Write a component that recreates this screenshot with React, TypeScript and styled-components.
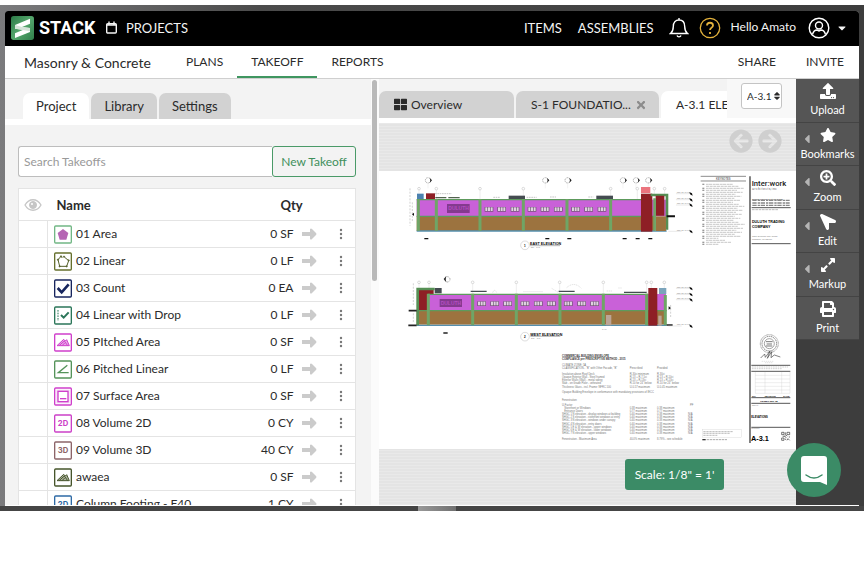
import React from "react";
import styled, { createGlobalStyle } from "styled-components";
import {
  FaUpload,
  FaStar,
  FaSearchPlus,
  FaLocationArrow,
  FaExpandAlt,
  FaPrint,
  FaThLarge,
  FaTimes,
  FaCaretDown,
  FaCaretLeft,
  FaSort,
  FaArrowCircleLeft,
  FaArrowCircleRight,
} from "react-icons/fa";

const green = "#3b8b66";
const line = "#e4e4e4";

const GlobalStyle = createGlobalStyle`
  * { box-sizing: border-box; }
  body { margin: 0; background: #fff; color: #2b2b2b; font: 12px/16px Lato, "Liberation Sans", sans-serif; }
  button, input, select { font: inherit; color: inherit; margin: 0; }
  button { border: 0; background: none; padding: 0; cursor: pointer; }
  a { color: inherit; text-decoration: none; }
  svg { display: block; flex: none; }
`;

const Page = styled.div`
  height: 100vh;
  display: grid;
  grid-template-rows: minmax(0, 1fr) 70px;
  padding-top: 5px;
`;

const Monitor = styled.div`
  display: flex;
  flex-direction: column;
  padding: 6px 5px 0;
  background: linear-gradient(90deg, #7b7b7d, #4b4b4b 30%, #3d3d3d 100%);
  min-height: 0;
`;

const Chin = styled.div`
  flex: none;
  height: 5px;
  margin: 0 -5px;
  background: #454545;
  display: flex;
  justify-content: center;
`;

const Stand = styled.span`
  width: 38px;
  margin-left: 10px;
  background: linear-gradient(90deg, #999, #707070);
`;

const Screen = styled.div`
  flex: 1;
  min-height: 0;
  display: flex;
  flex-direction: column;
  border-radius: 3px 3px 0 0;
  overflow: hidden;
  background: #fff;
  border-bottom: 1px solid #fff;
`;

const TopBar = styled.header`
  flex: none;
  height: 35px;
  background: #000;
  color: #f4f4f4;
  display: flex;
  align-items: center;
  padding: 0 11px 2px 6px;
  font-size: 13px;
`;

const Brand = styled.a`
  display: flex;
  align-items: center;
  gap: 5px;
  width: 95px;
  color: #fff;
  font: bold 18px/24px Roboto, "Liberation Sans", sans-serif;
`;

const TopLink = styled.a`
  display: flex;
  align-items: center;
  gap: 9px;
`;

const TopLinks = styled.div`
  display: flex;
  gap: 16px;
  margin-right: 3px;
`;

const TopRight = styled.div`
  margin-left: auto;
  display: flex;
  align-items: center;
  gap: 12px;
`;

const TopTools = styled.div`
  display: flex;
  align-items: center;
  gap: 10px;
`;

const Greeting = styled.span`
  font-size: 12px;
  padding-bottom: 2px;
`;

const Account = styled.button`
  display: flex;
  align-items: center;
  gap: 6px;
`;

const NavBar = styled.nav`
  flex: none;
  height: 33px;
  display: flex;
  border-bottom: 1px solid #cfcfcf;
  padding: 0 15px 0 19px;
`;

const ProjectName = styled.h1`
  margin: 0;
  width: 148px;
  font-size: 14px;
  line-height: 33px;
  font-weight: 400;
  white-space: nowrap;
`;

const NavLink = styled.a<{ $active?: boolean }>`
  height: 32px;
  padding: 0 14px;
  line-height: 31px;
  border-bottom: 2px solid ${(p) => (p.$active ? "#3f9660" : "transparent")};
`;

const NavEnd = styled.div`
  margin-left: auto;
  display: flex;
  gap: 30px;
  line-height: 31px;
`;

const Main = styled.div`
  flex: 1;
  min-height: 0;
  display: grid;
  grid-template-columns: 374px minmax(0, 1fr) 63px;
`;

const Panel = styled.aside`
  display: grid;
  grid-template-columns: minmax(0, 1fr) 8px;
  min-height: 0;
  overflow: hidden;
`;

const PanelBody = styled.div`
  background: #f3f3f3;
  overflow: hidden;
`;

const Track = styled.div`
  background: #fbfbfb;
  padding: 1px 2px 0 1px;
`;

const Thumb = styled.div`
  height: 201px;
  border-radius: 3px;
  background: #b9b9b9;
`;

const TabRow = styled.div`
  display: flex;
  gap: 2px;
  padding: 14px 0 0 18px;
  border-bottom: 6px solid #fff;
`;

const PanelTab = styled.button<{ $active?: boolean }>`
  height: 26px;
  padding: 0 13px;
  font-size: 13px;
  border-radius: 7px 7px 0 0;
  background: ${(p) => (p.$active ? "#fff" : "#d2d2d2")};
`;

const SearchRow = styled.div`
  display: flex;
  height: 31px;
  margin: 21px 15px 11px 13px;
`;

const SearchBox = styled.input`
  flex: 1;
  min-width: 0;
  border: 1px solid #bdbdbd;
  border-right: 0;
  border-radius: 3px 0 0 3px;
  background: #fff;
  padding: 0 5px;
  &::placeholder { color: #999; opacity: 1; }
`;

const NewButton = styled.button`
  width: 84px;
  border: 1px solid #4a9a68;
  border-radius: 3px;
  color: #3f8f5c;
  white-space: nowrap;
`;

const Takeoffs = styled.table`
  width: calc(100% - 28px);
  margin-left: 13px;
  table-layout: fixed;
  border-collapse: collapse;
  background: #fff;
  border: 1px solid ${line};
  td, th { padding: 0; border-bottom: 1px solid ${line}; }
  th { height: 32px; text-align: left; font-weight: 700; font-size: 13px; }
  td { height: 27px; white-space: nowrap; }
  tbody td:first-child { border-right: 1px solid ${line}; }
  svg { margin: 0 auto; }
`;

const Col = styled.col<{ $w?: number }>`
  width: ${(p) => (p.$w ? p.$w + "px" : "auto")};
`;

const NameHead = styled.th`
  && { padding-left: 9px; }
`;

const QtyHead = styled.th`
  && { padding-left: 59px; }
`;

const NameCell = styled.div`
  display: flex;
  align-items: center;
  gap: 4px;
  padding-left: 6px;
  && svg { margin: 0; }
`;

const QtyCell = styled.td`
  text-align: right;
`;

const RowButton = styled.button`
  display: block;
  margin: 0 auto;
`;

const Viewer = styled.section`
  display: flex;
  flex-direction: column;
  min-width: 0;
  min-height: 0;
`;

const SheetBar = styled.div`
  flex: none;
  display: flex;
  background: #f3f3f3;
  height: 44px;
  border-bottom: 5px solid #fff;
`;

const SheetTabs = styled.div`
  flex: 1;
  min-width: 0;
  display: flex;
  gap: 2px;
  padding-top: 12px;
  overflow: hidden;
`;

const SheetTab = styled.button<{ $active?: boolean; $w: number }>`
  flex: none;
  width: ${(p) => p.$w}px;
  height: 27px;
  display: flex;
  align-items: center;
  gap: 4px;
  padding: 0 ${(p) => (p.$w > 140 ? 12 : 15)}px 0 15px;
  justify-content: ${(p) => (p.$w > 140 ? "space-between" : "flex-start")};
  border-radius: 7px 7px 0 0;
  background: ${(p) => (p.$active ? "#fff" : "#d2d2d2")};
  white-space: nowrap;
`;

const PickerArea = styled.div`
  flex: none;
  width: 69px;
  padding: 4px 14px;
  background: #f8f8f8;
`;

const Picker = styled.label`
  display: flex;
  align-items: center;
  height: 26px;
  padding: 0 2px 0 5px;
  border: 1px solid #c4c4c4;
  border-radius: 3px;
  background: #fff;
  font-size: 10px;
`;

const PickerSelect = styled.select`
  appearance: none;
  flex: none;
  border: 0;
  padding: 0;
  background: none;
`;

const Canvas = styled.div`
  position: relative;
  flex: 1;
  min-height: 0;
  padding-top: 48px;
  overflow: hidden;
  background-color: #e4e4e4;
  background-image: repeating-linear-gradient(0deg, rgba(255, 255, 255, 0.2) 0 1px, transparent 1px 3px);
`;

const Paging = styled.div`
  position: absolute;
  top: 6px;
  right: 14px;
  display: flex;
  gap: 5px;
  color: #cfcfcf;
`;

const Sheet = styled.svg`
  width: 100%;
  height: auto;
  background: #fff;
`;

const ScaleTag = styled.button`
  position: absolute;
  right: 72px;
  bottom: 15px;
  width: 99px;
  height: 31px;
  border-radius: 3px;
  background: ${green};
  color: #fff;
`;

const Rail = styled.aside`
  background: #3d3d3d;
  position: relative;
`;

const ToolList = styled.div`
  height: 261px;
  display: grid;
  grid-template-rows: repeat(6, 1fr);
`;

const Tool = styled.button`
  position: relative;
  width: 100%;
  border-bottom: 1px solid #444;
  padding-top: 4px;
  display: flex;
  flex-direction: column;
  align-items: center;
  gap: 3px;
  background: #555;
  color: #fff;
  font-size: 11px;
  line-height: 15px;
`;

const Flyout = styled.span`
  position: absolute;
  left: 4px;
  top: 9px;
  color: #b5b5b5;
`;

const Flip = styled.span`
  transform: scaleX(-1);
`;

const Chat = styled.button`
  position: absolute;
  right: 18px;
  bottom: 8px;
  width: 54px;
  height: 54px;
  border-radius: 50%;
  background: ${green};
  display: grid;
  place-items: center;
`;

function LogoMark() {
  return (
    <svg width="23" height="24" viewBox="0 0 69 72">
      <defs>
        <linearGradient id="mark" x1="0" y1="0" x2="1" y2="1">
          <stop offset="0" stopColor="#2c7a48" />
          <stop offset="0.5" stopColor="#55a66c" />
          <stop offset="1" stopColor="#2f7f4b" />
        </linearGradient>
      </defs>
      <rect width="69" height="72" rx="8" fill="url(#mark)" />
      <path d="M12 27 57 8v15L33 33l24 3v12L12 66V52l25-11-25-3Z" fill="#fff" />
      <path d="m12 27 21 6 24 3v10L12 38Z" fill="#d5e4d9" />
    </svg>
  );
}

function GlyphBox({ kind, color }: { kind: string; color: string }) {
  return (
    <svg width="18" height="19" viewBox="0 0 54 57">
      <rect x="2" y="3" width="50" height="51" rx="3" fill="#fff" stroke={color} strokeWidth="4" />
      {kind === "area" && <path d="M27 12 43 24 37 44H17L11 24Z" fill="#b565b4" />}
      {kind === "linear" && (
        <g fill="#55602a" stroke="#55602a" strokeWidth="2">
          <path d="m25 18-4-5-9 10 5 20h21l6-17-13-11" fill="none" strokeWidth="3" />
          {[[12, 23], [17, 43], [38, 43], [44, 25], [30, 14], [21, 13]].map(([x, y]) => (
            <circle key={x} cx={x} cy={y} r="2" />
          ))}
        </g>
      )}
      {kind === "count" && <path d="m11 27 12 13 21-24" fill="none" stroke={color} strokeWidth="8" />}
      {kind === "drop" && (
        <g fill="none" stroke={color}>
          <path d="M12 12v33" strokeWidth="3" strokeDasharray="5 3" />
          <path d="m21 27 8 8 15-16" strokeWidth="6" />
        </g>
      )}
      {kind === "roof" && (
        <g fill="none" stroke={color} strokeWidth="3">
          <path d="m9 38 20-19 5 5 4-4 8 18Z" fill={color} fillOpacity="0.45" />
          <path d="m15 38 16-14 10 14M24 38l8-8" />
        </g>
      )}
      {kind === "angle" && <path d="M40 16 13 38h31" fill="none" stroke={color} strokeWidth="4" />}
      {kind === "surface" && (
        <g fill="none" stroke={color}>
          <rect x="7" y="8" width="40" height="41" stroke="none" fill={color} fillOpacity="0.2" />
          <rect x="12" y="13" width="30" height="31" fill="#fff" strokeWidth="4" />
          <path d="M18 35h19" strokeWidth="4" />
        </g>
      )}
      {(kind === "2D" || kind === "3D") && (
        <text x="27" y="37" textAnchor="middle" fontSize="23" fontWeight="700" fontFamily="Inter, sans-serif" fill={color}>
          {kind}
        </text>
      )}
    </svg>
  );
}

const takeoffs = [
  ["area", "#72b785", "01 Area", "0 SF"],
  ["linear", "#66702d", "02 Linear", "0 LF"],
  ["count", "#17255e", "03 Count", "0 EA"],
  ["drop", "#2b7659", "04 Linear with Drop", "0 LF"],
  ["roof", "#cf3fcb", "05 PItched Area", "0 SF"],
  ["angle", "#55935a", "06 Pitched Linear", "0 LF"],
  ["surface", "#cf3fcb", "07 Surface Area", "0 SF"],
  ["2D", "#cc40c8", "08 Volume 2D", "0 CY"],
  ["3D", "#8c6468", "09 Volume 3D", "40 CY"],
  ["roof", "#46552b", "awaea", "0 SF"],
  ["2D", "#2e6aa5", "Column Footing - F40", "1 CY"],
];

function Marker({ x, y }: { x: number; y: number }) {
  return (
    <g>
      <circle cx={x} cy={y} r="8" fill="#fff" stroke="#777" strokeWidth="2" strokeDasharray="3 2" />
      <path d={`M${x + 5} ${y - 8}l7 8-7 8 2-8Z`} fill="#222" />
      <path d={`M${x} ${y + 10}v14`} stroke="#ddd" strokeWidth="1" />
    </g>
  );
}

function WindowGroup({ x, y }: { x: number; y: number }) {
  return (
    <g>
      <rect x={x} y={y} width="26" height="14" fill="#6f5573" />
      {[2, 10, 18].map((d) => (
        <rect key={d} x={x + d} y={y + 1} width="6" height="11" fill="#e0d2e0" />
      ))}
    </g>
  );
}

function Levels({ y }: { y: number }) {
  return (
    <g>
      {[0, 18, 34, 113].map((d) => (
        <g key={d}>
          <path d={`M${d > 100 ? 805 : 828} ${y + d}h40`} stroke="#bbb" strokeWidth="1" />
          <path d={`m868 ${y + d - 5} 8 4 2 7-8-4Z`} fill="#111" />
          <text x="830" y={y + d - 2} fontSize="6" fill="#888">TOP OF WALL</text>
        </g>
      ))}
    </g>
  );
}

function EastElevation() {
  return (
    <g transform="translate(21 -6) scale(0.3333)">
      {[84, 436, 503, 669, 708, 745].map((x) => <Marker key={x} x={x} y={46} />)}
      {[57, 109, 240, 370, 632, 712, 763, 794].map((x) => (
        <g key={x}>
          <circle cx={x} cy="71" r="4" fill="none" stroke="#999" />
          <path d={`M${x} 75v28`} stroke="#ccc" />
        </g>
      ))}
      <path d="M30 70v112M37 112v60" stroke="#bbb" strokeWidth="2" strokeDasharray="6 4" />
      <path d="m36 148 6-5v10Z" fill="#111" />
      <path d="M105 86h50M280 97h20M380 97h30M450 96h18M565 96h15" stroke="#aaa" strokeWidth="2" strokeDasharray="5 2" />
      <rect x="51" y="86" width="20" height="16" fill="#4c82b0" />
      <rect x="78" y="85" width="27" height="17" fill="#8e1f25" />
      <path d="M106 98h33M145 98h34" stroke="#52634f" strokeWidth="4" />
      <rect x="326" y="92" width="49" height="10" fill="#444b50" />
      <rect x="589" y="92" width="50" height="10" fill="#444b50" />
      <rect x="50" y="104" width="750" height="50" fill="#c961d8" />
      <rect x="50" y="154" width="715" height="44" fill="#9c733f" />
      <path d="M50 198h750" stroke="#558fae" strokeWidth="4" />
      <path d="M50 104h700M50 154h715" stroke="#5d9a5c" strokeWidth="4" />
      <path d="M55 103v94M109 103v94M240 103v94M370 103v94M501 103v94M632 103v94" stroke="#6fa566" strokeWidth="9" />
      <rect x="141" y="117" width="68" height="27" fill="#843a8e" />
      <text x="145" y="136" fontSize="15" fontWeight="700" fill="#b44dc3">DULUTH</text>
      {[254, 292, 332, 383, 422, 462, 514, 553, 593].map((x) => <WindowGroup key={x} x={x} y={126} />)}
      <rect x="723" y="66" width="28" height="18" fill="#eb747e" />
      <rect x="723" y="86" width="34" height="114" fill="#8e1f25" />
      <path d="M752 90h49v104" fill="none" stroke="#568f54" strokeWidth="8" />
      <path d="M767 92h26v60h-26Z" fill="#8e1f25" />
      <rect x="768" y="154" width="30" height="44" fill="#9c733f" />
      <path d="M764 100v97" stroke="#6fa566" strokeWidth="8" />
      <path d="M800 154h25" stroke="#111" strokeWidth="6" />
      <path d="M73 221h12M436 221h12M502 221h12M668 221h12M707 221h12M745 221h12" stroke="#111" strokeWidth="4" />
      <Levels y={86} />
      <circle cx="375" cy="241" r="13" fill="#fff" stroke="#999" />
      <text x="372" y="245" fontSize="9" fontWeight="700">1</text>
      <text x="390" y="240" fontSize="11" fontWeight="700">EAST ELEVATION</text>
      <path d="M390 242h90" stroke="#222" />
      <text x="392" y="250" fontSize="6" fill="#666">1/8" = 1'-0"</text>
    </g>
  );
}

function WestElevation() {
  return (
    <g transform="translate(21 84) scale(0.3333)">
      <path d="m139 63-8 9 8 10-2-9Z" fill="#111" />
      <circle cx="142" cy="73" r="8" fill="none" stroke="#777" strokeWidth="2" strokeDasharray="3 2" />
      {[57, 87, 218, 349, 479, 610, 740, 754, 793].map((x) => (
        <g key={x}>
          <circle cx={x} cy="82" r="4" fill="none" stroke="#999" />
          <path d={`M${x} 86v30`} stroke="#ccc" />
        </g>
      ))}
      <path d="M40 85v65M40 175v30M812 150v40" stroke="#bbb" strokeWidth="2" strokeDasharray="6 4" />
      <path d="M278 113q6-14 12 0M370 110h58M500 98q22-20 44 2M620 108h18M655 99h12M455 100l20 12" fill="none" stroke="#aaa" strokeDasharray="4 2" />
      <rect x="56" y="104" width="45" height="62" fill="#8e1f25" />
      <rect x="104" y="99" width="21" height="16" fill="#444b50" />
      <path d="M212 109h48M476 109h48M672 112h68" stroke="#444b50" strokeWidth="4" />
      <rect x="84" y="117" width="714" height="48" fill="#c961d8" />
      <rect x="50" y="168" width="748" height="41" fill="#9c733f" />
      <path d="M50 211h750" stroke="#558fae" strokeWidth="4" />
      <path d="M84 118h660M50 167h750" stroke="#5d9a5c" strokeWidth="4" />
      <path d="M53 211V102h51" fill="none" stroke="#568f54" strokeWidth="8" />
      <path d="M85 116v95M218 116v95M349 116v95M480 116v95M610 116v95M740 116v95M796 120v91" stroke="#6fa566" strokeWidth="9" />
      <rect x="119" y="132" width="67" height="24" fill="#843a8e" />
      <text x="122" y="149" fontSize="15" fontWeight="700" fill="#b44dc3">DULUTH</text>
      {[232, 271, 310, 362, 402, 441, 492, 532, 571].map((x) => <WindowGroup key={x} x={x} y={139} />)}
      <rect x="618" y="180" width="16" height="31" fill="#bba596" />
      <rect x="745" y="99" width="27" height="113" fill="#8e1f25" />
      <rect x="777" y="99" width="22" height="18" fill="#7ba4bb" />
      <rect x="775" y="182" width="10" height="30" fill="#bba596" />
      <path d="M26 167h24M25 211h25M800 210h18M130 234h13" stroke="#222" strokeWidth="5" />
      <path d="m806 154 7 5-7 5Z" fill="#111" />
      <Levels y={100} />
      <circle cx="375" cy="245" r="13" fill="#fff" stroke="#999" />
      <text x="372" y="249" fontSize="9" fontWeight="700">2</text>
      <text x="391" y="242" fontSize="11" fontWeight="700">WEST ELEVATION</text>
      <path d="M391 244h90" stroke="#222" />
      <text x="393" y="252" fontSize="6" fill="#666">1/8" = 1'-0"</text>
      <text x="606" y="226" fontSize="7" fill="#888">TYP.</text>
    </g>
  );
}

const envelope = [
  [103, "Insulation above Roof Deck", "R-30ci minimum", "R-30ci"],
  [113, "Opaque Exterior Wall - Steel framed", "R-13 + R-7.5ci", "R-13 + R-10ci"],
  [122, "Exterior Walls (Wall) - metal siding", "R-13 + R-13ci", "R-13 + R-13ci"],
  [131, "Slab - on Grade Floor - unheated", "R-10 for 24\" below", "R-10 for 24\" below"],
  [141, "Thickness Glass - incl. Frame: NFRC 100", "U-0.57 maximum", "U-0.45 maximum"],
  [206, "Storefront or Windows", "0.38 maximum", "0.38 maximum"],
  [215, "Entrance Doors", "0.77 maximum", "0.77 maximum"],
  [224, "SHGC 1   N elevation - display windows at building", "0.40 maximum", "0.38 maximum"],
  [233, "SHGC 2   S elevation - storefront windows at entry", "0.40 maximum", "0.38 maximum"],
  [242, "SHGC 3   N elevation - windows under canopy", "0.40 maximum", "0.38 maximum"],
  [252, "SHGC 4   N elevation - entry doors", "0.40 maximum", "0.38 maximum"],
  [261, "SHGC 5   E & W elevation - upper windows", "0.40 maximum", "0.38 maximum"],
  [270, "SHGC 6   E & W elevation - lower windows", "0.40 maximum", "0.38 maximum"],
  [281, "SHGC 7   N elevation - upper windows", "0.40 maximum", "0.38 maximum"],
  [298, "Fenestration - Maximum Area", "40.0% maximum", "8.79% - see schedule"],
] as const;

function EnvelopeNotes() {
  return (
    <g transform="translate(151 169) scale(0.3333)" fontSize="8" fill="#777">
      <text x="96" y="51" fontWeight="700" fill="#333">COMMERCIAL BUILDING ENVELOPE</text>
      <text x="96" y="60" fontWeight="700" fill="#333">COMPLIANCE per PRESCRIPTIVE METHOD - 2015</text>
      <text x="96" y="79">CLIMATE ZONE: 5A</text>
      <text x="96" y="88">CLASSIFICATION - "B" with Other Facade, "B"</text>
      <text x="299" y="88">Prescribed</text>
      <text x="381" y="88">Provided</text>
      <text x="96" y="158">Opaque Building Envelope in conformance with mandatory provisions of IECC</text>
      <text x="96" y="182">Fenestration</text>
      <text x="96" y="197">U-Factor</text>
      {envelope.map(([y, label, a, b]) => (
        <g key={y}>
          <text x={y === 206 || y === 215 ? 103 : 96} y={y + 2}>{label}</text>
          <text x="299" y={y + 2}>{a}</text>
          <text x="381" y={y + 2}>{b}</text>
          {y > 220 && y < 290 && <text x="474" y={y + 2}>N/A</text>}
        </g>
      ))}
      <text x="480" y="197">PF</text>
    </g>
  );
}

function KeyNotes() {
  const rows = Array.from({ length: 31 }, (_, i) => 58 + i * 6);
  return (
    <g transform="translate(311 -6) scale(0.3333)">
      <path d="M32 34h136M32 48h136" stroke="#555" strokeWidth="2" />
      <text x="78" y="44" fontSize="8" fontWeight="700" fill="#777">KEYNOTES</text>
      {rows.map((y, i) => (
        <g key={y}>
          {i % 3 !== 1 && <rect x="37" y={y - 2} width="6" height="4" fill="#999" />}
          <path d={`M48 ${y}H${i > 26 ? 85 + (i % 3) * 20 : 128 + ((i * 17) % 38)}`} stroke="#aaa" strokeWidth="2" strokeDasharray={i % 2 ? "9 2" : "6 1 12 2"} />
        </g>
      ))}
      <path d="M180 34v800" stroke="#444" strokeWidth="4" />
      <text x="185" y="63" fontSize="23" fontWeight="500" fontFamily="Roboto, sans-serif" fill="#222">Inter:work</text>
      <text x="187" y="76" fontSize="8" fill="#333">a r c h i t e c t s, i n c</text>
      <text x="187" y="104" fontSize="6">Building Planning & Interior Design</text>
      <path d="M187 106h112M187 114h112M187 121h112" stroke="#888" strokeWidth="4" strokeDasharray="13 3 7 2" />
      <path d="M185 128h117" stroke="#555" strokeWidth="3" />
      <path d="M186 134h80" stroke="#bbb" strokeWidth="3" strokeDasharray="8 2" />
      <text x="186" y="175" fontSize="11" fontWeight="700">DULUTH TRADING</text>
      <text x="186" y="189" fontSize="11" fontWeight="700">COMPANY</text>
      <text x="186" y="217" fontSize="7" fill="#777">1300 Deming Way Road</text>
      <text x="186" y="225" fontSize="7" fill="#777">Madison, WI 53717</text>
      <path d="M185 236h117" stroke="#555" strokeWidth="3" />
    </g>
  );
}

function TitleBlock() {
  return (
    <g transform="translate(311 139) scale(0.3333)">
      <g fill="none" stroke="#777">
        <circle cx="238" cy="101" r="27" strokeWidth="3" strokeDasharray="2 2" />
        <circle cx="238" cy="101" r="22" strokeDasharray="4 2" strokeWidth="3" />
        <circle cx="238" cy="101" r="15" strokeWidth="2" />
        <path d="M228 95h20M230 102h16M227 108h20" strokeWidth="3" />
        <path d="m212 144 12-12 2 10 14-19-8 22 13-20-2 18 10-8 18 6" stroke="#444" strokeWidth="2" />
        <path d="M215 154h37M225 158h22" stroke="#aaa" strokeDasharray="4 2" />
        <path d="M184 166h117M184 184h117" stroke="#555" strokeWidth="3" />
        <path d="M186 171h108M186 176h90" stroke="#bbb" strokeWidth="2" strokeDasharray="5 2" />
        <path d="M196 186v64h104v-64M225 186v64M275 186v64M196 196h104M196 207h104M196 218h104M196 229h104M196 240h104" stroke="#ccc" />
        <path d="M184 263h117M184 280h117M184 352h117" stroke="#555" strokeWidth="3" />
      </g>
      <g fontSize="7" fontWeight="700">
        <text x="186" y="261">NO.</text>
        <text x="224" y="261">REVISION</text>
        <text x="280" y="261">DATE</text>
        <text x="211" y="275">PERMIT SET 18</text>
        <text x="186" y="289" fontWeight="400" fill="#888">Sheet</text>
        <text x="184" y="323" fontSize="8">ELEVATIONS</text>
        <text x="184" y="358" fontWeight="400" fill="#888">Number</text>
      </g>
      <text x="183" y="392" fontSize="22" fontWeight="700" fontFamily="Liberation Sans, sans-serif">A-3.1</text>
      <g fill="none" stroke="#333" strokeWidth="2">
        <path d="M275 367h7v7h-7zM291 367h8v7h-8zM275 384h7v7h-7z" />
        <path d="M286 367v6l6 6M278 379h7l4 5M287 390v-4M291 391l3-5 5 5M298 379v4M284 376l3 2" />
      </g>
      <rect x="37" y="359" width="117" height="23" fill="none" stroke="#ccc" />
      <path d="M40 365h90M40 370h80M40 376h42" stroke="#bbb" strokeWidth="3" strokeDasharray="7 2" />
      <path d="M37 389h10" stroke="#333" strokeWidth="4" />
      <path d="M50 389h62" stroke="#aaa" strokeWidth="3" strokeDasharray="7 2" />
    </g>
  );
}

function Plan() {
  return (
    <Sheet viewBox="0 0 417 278" role="img" aria-label="Elevation plan A-3.1" fontFamily="Liberation Sans, sans-serif">
      <EastElevation />
      <WestElevation />
      <EnvelopeNotes />
      <KeyNotes />
      <TitleBlock />
    </Sheet>
  );
}

const tools = [
  { label: "Upload", icon: <FaUpload size={16} />, menu: false },
  { label: "Bookmarks", icon: <FaStar size={16} />, menu: true },
  { label: "Zoom", icon: <FaSearchPlus size={16} />, menu: true },
  { label: "Edit", icon: <Flip><FaLocationArrow size={16} /></Flip>, menu: true },
  { label: "Markup", icon: <FaExpandAlt size={16} />, menu: true },
  { label: "Print", icon: <FaPrint size={16} />, menu: false },
];

export default function App() {
  return (
    <Page>
      <GlobalStyle />
      <Monitor>
        <Screen>
          <TopBar>
            <Brand href="#">
              <LogoMark />
              STACK
            </Brand>
            <TopLink href="#">
              <svg width="11" height="13" viewBox="0 0 11 13" fill="none" stroke="currentColor" strokeWidth="1.4">
                <rect x="0.7" y="2.7" width="9.6" height="9.3" rx="1" />
                <path d="M3 0.5v3M8 0.5v3M1 4h9" />
              </svg>
              PROJECTS
            </TopLink>
            <TopRight>
              <TopLinks>
                <TopLink href="#">ITEMS</TopLink>
                <TopLink href="#">ASSEMBLIES</TopLink>
              </TopLinks>
              <TopTools>
                <button aria-label="Notifications">
                  <svg width="20" height="22" viewBox="0 0 20 22" fill="none" stroke="#fff" strokeWidth="1.4">
                    <path d="M10 1v2M1.5 16.5C4 14.5 4.3 13 4.3 9.5 4.300 5.500 6.500 3 10 3s5.700 2.500 5.700 6.500c0 3.500.3 5 2.800 7ZM8 18.500c.7 1.800 3.300 1.800 4 0" />
                  </svg>
                </button>
                <button aria-label="Help">
                  <svg width="22" height="22" viewBox="0 0 22 22" fill="none" stroke="#e3b23c">
                    <circle cx="11" cy="11" r="9.700" strokeWidth="1.300" />
                    <path d="M8 8.500C8 4.800 14 4.800 14 8.500c0 2-3 2.300-3 4.500M11 15v2" strokeWidth="1.800" />
                  </svg>
                </button>
                <Greeting>Hello Amato</Greeting>
              </TopTools>
              <Account aria-label="Account">
                <svg width="22" height="22" viewBox="0 0 22 22" fill="none" stroke="#fff" strokeWidth="1.400">
                  <circle cx="11" cy="11" r="9.800" />
                  <circle cx="11" cy="8.500" r="3.500" />
                  <path d="M4.500 17.500c.8-3 3-4.500 4.500-4.500l2 1 2-1c1.500 0 3.700 1.500 4.500 4.500" />
                </svg>
                <FaCaretDown size={12} />
              </Account>
            </TopRight>
          </TopBar>
          <NavBar>
            <ProjectName>Masonry &amp; Concrete</ProjectName>
            <NavLink href="#">PLANS</NavLink>
            <NavLink href="#" $active>TAKEOFF</NavLink>
            <NavLink href="#">REPORTS</NavLink>
            <NavEnd>
              <a href="#">SHARE</a>
              <a href="#">INVITE</a>
            </NavEnd>
          </NavBar>
          <Main>
            <Panel>
              <PanelBody>
                <TabRow>
                  <PanelTab $active>Project</PanelTab>
                  <PanelTab>Library</PanelTab>
                  <PanelTab>Settings</PanelTab>
                </TabRow>
                <SearchRow>
                  <SearchBox aria-label="Search Takeoffs" placeholder="Search Takeoffs" />
                  <NewButton>New Takeoff</NewButton>
                </SearchRow>
                <Takeoffs>
                  <colgroup>
                    <Col $w={29} />
                    <Col />
                    <Col $w={72} />
                    <Col $w={33} />
                    <Col $w={29} />
                  </colgroup>
                  <thead>
                    <tr>
                      <th aria-label="Visible">
                        <svg width="18" height="12" viewBox="0 0 18 12" fill="none" stroke="#c6c6c6">
                          <path d="M1 6c4-7 12-7 16 0-4 7-12 7-16 0Z" strokeWidth="1.300" />
                          <circle cx="9" cy="6" r="3.500" fill="#c6c6c6" />
                          <circle cx="8" cy="5" r="1" fill="#fff" stroke="none" />
                        </svg>
                      </th>
                      <NameHead>Name</NameHead>
                      <QtyHead colSpan={3}>Qty</QtyHead>
                    </tr>
                  </thead>
                  <tbody>
                    {takeoffs.map(([kind, color, name, qty]) => (
                      <tr key={name}>
                        <td />
                        <td>
                          <NameCell>
                            <GlyphBox kind={kind} color={color} />
                            {name}
                          </NameCell>
                        </td>
                        <QtyCell>{qty}</QtyCell>
                        <td>
                          <RowButton aria-label={"Open " + name}>
                            <svg width="15" height="12" viewBox="0 0 15 12" fill="#cbcbcb">
                              <path d="M0 4h8V1q1-1 2 0l4 4q1 1 0 2l-4 4q-1 1-2 0V8H0Z" />
                            </svg>
                          </RowButton>
                        </td>
                        <td>
                          <RowButton aria-label={"More for " + name}>
                            <svg width="4" height="12" viewBox="0 0 4 12" fill="#777">
                              <circle cx="2" cy="2" r="1.200" />
                              <circle cx="2" cy="6" r="1.200" />
                              <circle cx="2" cy="10" r="1.200" />
                            </svg>
                          </RowButton>
                        </td>
                      </tr>
                    ))}
                  </tbody>
                </Takeoffs>
              </PanelBody>
              <Track>
                <Thumb />
              </Track>
            </Panel>
            <Viewer>
              <SheetBar>
                <SheetTabs>
                  <SheetTab $w={135}>
                    <FaThLarge size={13} />
                    Overview
                  </SheetTab>
                  <SheetTab $w={143}>
                    S-1 FOUNDATIO...
                    <FaTimes size={12} color="#8c8c8c" />
                  </SheetTab>
                  <SheetTab $w={120} $active>A-3.1 ELEVATIONS</SheetTab>
                </SheetTabs>
                <PickerArea>
                  <Picker>
                    <PickerSelect aria-label="Sheet" defaultValue="A-3.1">
                      <option>A-3.1</option>
                    </PickerSelect>
                    <FaSort size={10} />
                  </Picker>
                </PickerArea>
              </SheetBar>
              <Canvas>
                <Paging>
                  <button aria-label="Previous sheet"><FaArrowCircleLeft size={24} /></button>
                  <button aria-label="Next sheet"><FaArrowCircleRight size={24} /></button>
                </Paging>
                <Plan />
                <ScaleTag>Scale: 1/8" = 1'</ScaleTag>
              </Canvas>
            </Viewer>
            <Rail>
              <ToolList>
                {tools.map((t) => (
                  <Tool key={t.label}>
                    {t.menu && <Flyout><FaCaretLeft size={14} /></Flyout>}
                    {t.icon}
                    {t.label}
                  </Tool>
                ))}
              </ToolList>
              <Chat aria-label="Chat">
                <svg width="26" height="29" viewBox="0 0 26 29">
                  <path d="M3 0h20q3 0 3 3v26l-7-3H3q-3 0-3-3V3q0-3 3-3Z" fill="#fff" />
                  <path d="M5 19q8 6 16 0" fill="none" stroke={green} strokeWidth="1.500" strokeLinecap="round" />
                </svg>
              </Chat>
            </Rail>
          </Main>
        </Screen>
        <Chin>
          <Stand />
        </Chin>
      </Monitor>
    </Page>
  );
}
